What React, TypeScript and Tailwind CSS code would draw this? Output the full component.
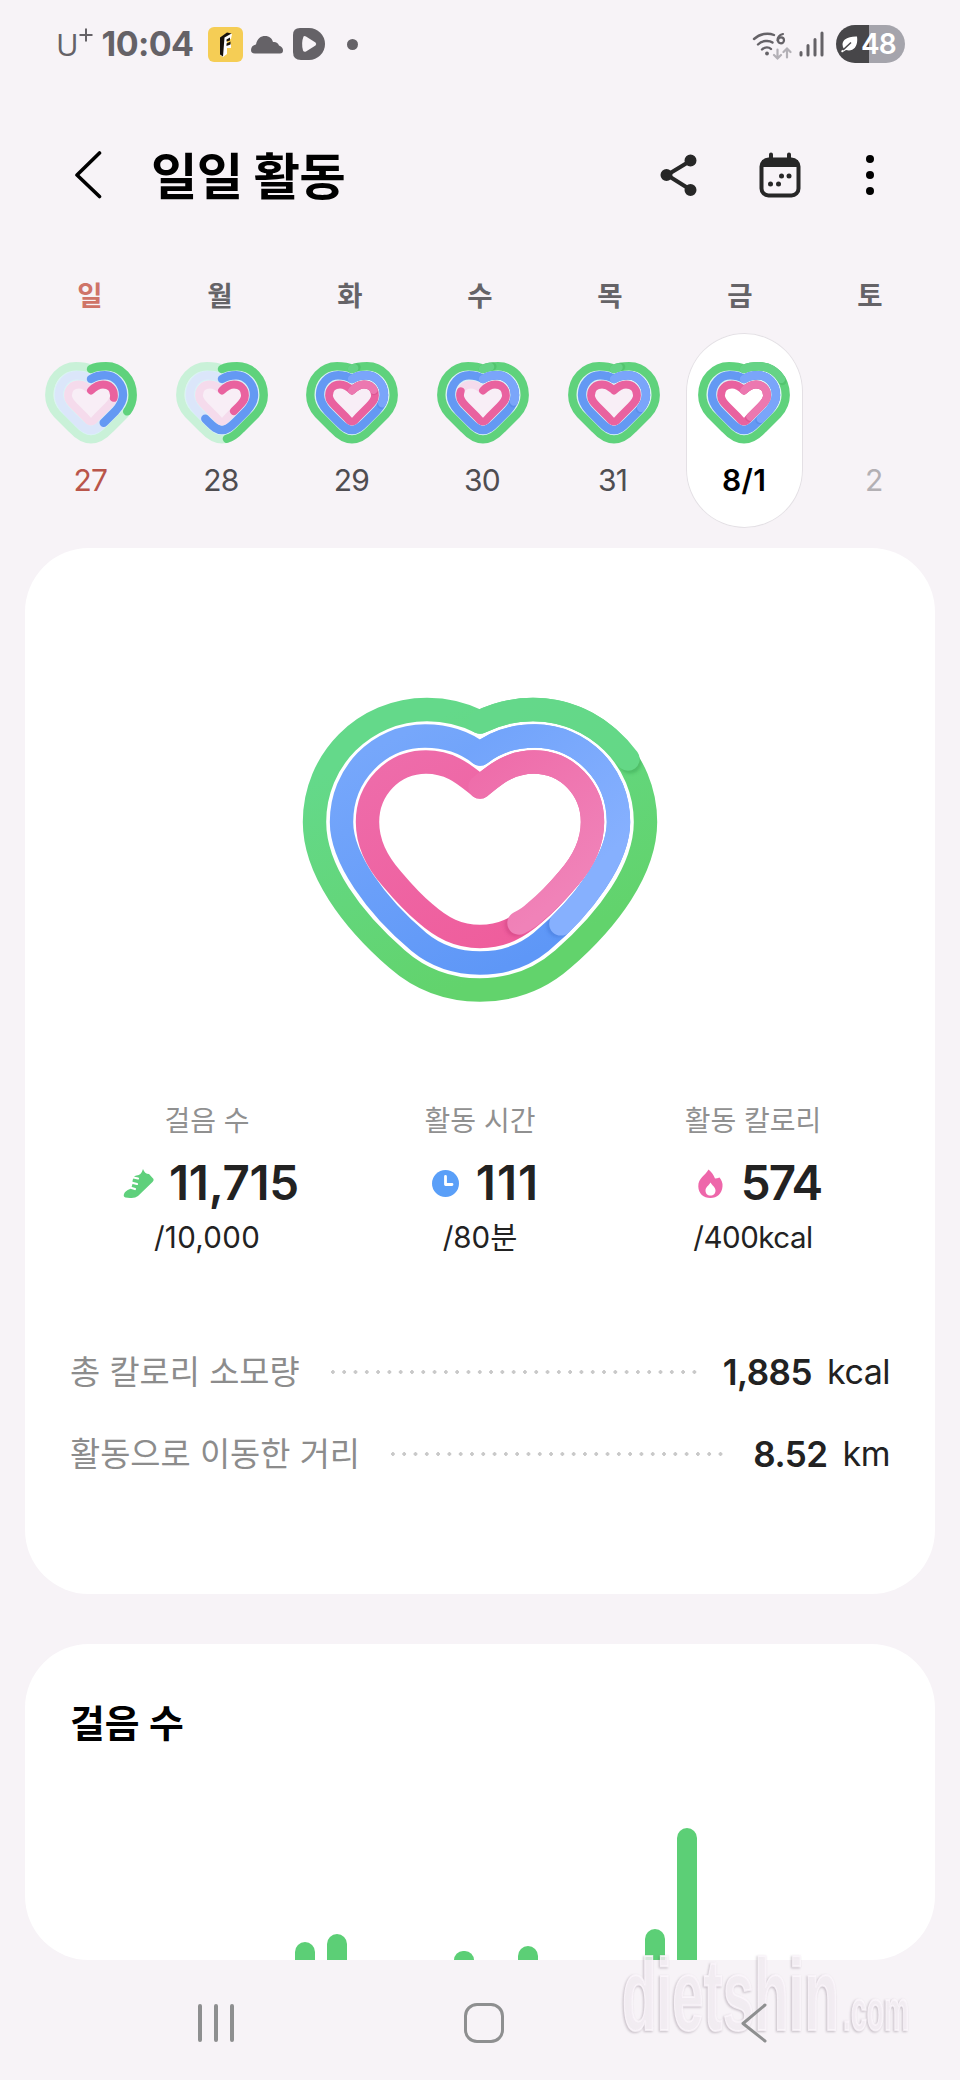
import React from 'react';

interface HeartDay {
  label: string;
  rings: [number, number, number] | null; // steps, time, calories in percent of the goal
  tone: string;
  selected?: boolean;
}

const weekdays = [
  { name: '일', tone: 'text-[#cf7468]' },
  { name: '월', tone: 'text-[#656367]' },
  { name: '화', tone: 'text-[#656367]' },
  { name: '수', tone: 'text-[#656367]' },
  { name: '목', tone: 'text-[#656367]' },
  { name: '금', tone: 'text-[#656367]' },
  { name: '토', tone: 'text-[#656367]' },
];

const days: HeartDay[] = [
  { label: '27', rings: [31, 42, 25], tone: 'text-[#b9554a]' },
  { label: '28', rings: [48, 61, 38], tone: 'text-[#4f4d51]' },
  { label: '29', rings: [101, 128, 119], tone: 'text-[#4f4d51]' },
  { label: '30', rings: [103, 127, 80], tone: 'text-[#4f4d51]' },
  { label: '31', rings: [102, 131, 98], tone: 'text-[#4f4d51]' },
  { label: '8/1', rings: [117, 139, 144], tone: 'font-semibold text-black', selected: true },
  { label: '2', rings: null, tone: 'text-[#b3b0b4]' },
];

const stepBars = [18, 26, 0, 0, 0, 9, 0, 14, 0, 0, 0, 31, 132];

const miniRings = [
  {
    d: 'M46 7 C50 5 55 4.3 61 4.3 C76 4.3 87.7 17 87.7 33 C87.7 41 84.5 47 80 52 L65 67 C59 73.5 53 77.4 46 77.4 C39 77.4 33 73.5 27 67 L12 52 C7.5 47 4.3 41 4.3 33 C4.3 17 16 4.3 31 4.3 C37 4.3 42 5 46 7 Z',
    width: 8.4,
    track: '#c9f1d8',
    main: '#5fd27c',
    lap: '#66d386',
    shade: '#3fae5a',
  },
  {
    d: 'M46 17 C50 14.5 54 13.3 60 13.3 C70 13.3 78 22 78 33 C78 39.5 75.5 43.5 70.5 49 L59.5 60 C54.5 65 51 68 46 68 C41 68 37.5 65 32.5 60 L21.5 49 C16.5 43.5 14 39.5 14 33 C14 22 22 13.3 32 13.3 C38 13.3 42 14.5 46 17 Z',
    width: 8.4,
    track: '#dbe6fa',
    main: '#6499f3',
    lap: '#7aa5fa',
    shade: '#4a7fdc',
  },
  {
    d: 'M46 28.5 C49 25.5 53 22.5 58 22.5 C64.5 22.5 69 27 69 33.5 C69 38 66.5 40.5 62.5 44.5 L52 55 C48.5 59 48 59.5 46 59.5 C44 59.5 43.5 59 40 55 L29.5 44.5 C25.5 40.5 23 38 23 33.5 C23 27 27.5 22.5 34 22.5 C39 22.5 43 25.5 46 28.5 Z',
    width: 7.8,
    track: '#f5dbec',
    main: '#e9629f',
    lap: '#ec78b0',
    shade: '#c74382',
  },
];

const bigRings = [
  {
    id: 'steps',
    d: 'M190 42 C206 34 224 29.5 243 29.5 C306 29.5 355.5 80 355.5 142 C355.5 190 318 240 273 279 C248 301 220 310 190 310 C160 310 132 301 107 279 C62 240 24.5 190 24.5 142 C24.5 80 74 29.5 137 29.5 C156 29.5 174 34 190 42 Z',
    lap: 'M190 42 C206 34 224 29.5 243 29.5 C281 29.5 315 48 338 79',
    base: ['#64d98a', '#62d36c'],
    over: ['#64d88a', '#64d884'],
    end: [338, 79, 2, 3],
    shade: '#2f9a48',
  },
  {
    id: 'time',
    d: 'M190 74 C205 62 224 56 245 56 C291 56 328.5 94 328.5 142 C328.5 178 294 226 251 262 C234 276 212 283 190 283 C168 283 146 276 129 262 C86 226 51.5 178 51.5 142 C51.5 94 89 56 135 56 C156 56 175 62 190 74 Z',
    lap: 'M190 74 C205 62 224 56 245 56 C291 56 328.5 94 328.5 142 C328.5 172.2 304.1 210.9 270.9 243.9',
    base: ['#76a7fb', '#5e97f7'],
    over: ['#72a4fb', '#86b0fe'],
    end: [270.9, 243.9, -3, 2],
    shade: '#3f74d2',
  },
  {
    id: 'calories',
    d: 'M190 107 C204 96 218 82 244 82 C277 82 302.5 109 302.5 142 C302.5 162 294 181 278 199 C267 212 256 224 245 233 C228 248 212 256.5 190 256.5 C168 256.5 152 248 135 233 C124 224 113 212 102 199 C86 181 77.5 162 77.5 142 C77.5 109 103 82 136 82 C162 82 176 96 190 107 Z',
    lap: 'M190 107 C204 96 218 82 244 82 C277 82 302.5 109 302.5 142 C302.5 162 294 181 278 199 C267 212 256 223 245 232 C240 237 235 240 229 243',
    base: ['#ee6dab', '#ef5c9b'],
    over: ['#ee6aa8', '#f082b8'],
    end: [229, 243, -3, 2],
    shade: '#c23678',
  },
];

const MiniHeart: React.FC<{ rings: [number, number, number]; selected?: boolean }> = ({ rings, selected }) => (
  <svg viewBox="0 0 92 82" className="h-[82px] w-[92px]" fill="none">
    <path d={miniRings[1].d} fill={selected ? '#ffffff' : '#f8eef6'} stroke="#d9f3f6" strokeWidth="10.8" />
    {miniRings.map((ring, i) => {
      const full = rings[i] >= 100;
      const lap = full ? rings[i] - 100 : rings[i];
      return (
        <g key={i} strokeWidth={ring.width} strokeLinecap="round" strokeLinejoin="round">
          <path d={ring.d} stroke={full ? ring.main : ring.track} />
          {full && (
            <path d={ring.d} pathLength={100} stroke={ring.shade} strokeOpacity="0.35" strokeDasharray={`${lap + 1} 200`} />
          )}
          <path d={ring.d} pathLength={100} stroke={full ? ring.lap : ring.main} strokeDasharray={`${lap} 200`} />
        </g>
      );
    })}
  </svg>
);

const BigHeart = () => (
  <svg viewBox="0 0 380 340" className="h-[340px] w-[380px]" fill="none">
    <defs>
      {bigRings.map((ring) => (
        <React.Fragment key={ring.id}>
          <linearGradient id={`${ring.id}-base`} x1="100" y1="60" x2="210" y2="290" gradientUnits="userSpaceOnUse">
            <stop stopColor={ring.base[0]} />
            <stop offset="1" stopColor={ring.base[1]} />
          </linearGradient>
          <linearGradient id={`${ring.id}-over`} x1="190" y1="60" x2="300" y2="190" gradientUnits="userSpaceOnUse">
            <stop stopColor={ring.over[0]} />
            <stop offset="1" stopColor={ring.over[1]} />
          </linearGradient>
          <mask id={`${ring.id}-mask`} maskUnits="userSpaceOnUse" x="0" y="0" width="380" height="340">
            <path d={ring.d} stroke="#fff" strokeWidth="23.4" />
          </mask>
        </React.Fragment>
      ))}
      <filter id="cap-shadow" x="-50%" y="-50%" width="200%" height="200%">
        <feGaussianBlur stdDeviation="1.8" />
      </filter>
    </defs>
    {bigRings.map((ring) => (
      <g key={ring.id} strokeWidth="23.4" strokeLinecap="round" strokeLinejoin="round">
        <path d={ring.d} stroke={`url(#${ring.id}-base)`} />
        <g mask={`url(#${ring.id}-mask)`}>
          <circle
            cx={ring.end[0] + ring.end[2]}
            cy={ring.end[1] + ring.end[3]}
            r="11.5"
            fill={ring.shade}
            fillOpacity="0.4"
            filter="url(#cap-shadow)"
          />
        </g>
        <path d={ring.lap} stroke={`url(#${ring.id}-over)`} />
      </g>
    ))}
  </svg>
);

const StatusBar = () => (
  <header className="flex h-[88px] items-center justify-between pl-[56px] pr-[55px] text-[#656267]">
    <div className="flex items-center">
      <span className="font-['Open_Sans',sans-serif] text-[31px] leading-none">U</span>
      <svg viewBox="0 0 14 14" className="-mt-[19px] h-[14px] w-[14px]" stroke="currentColor" strokeWidth="2">
        <path d="M7 0.5v13M0.5 7h13" />
      </svg>
      <span className="ml-[9px] w-[93px] whitespace-nowrap text-[34px] font-bold leading-none tracking-[-0.6px]">10:04</span>
      <svg viewBox="0 0 35 35" className="ml-[13px] h-[35px] w-[35px]">
        <rect width="35" height="35" rx="6" fill="#f5cd55" />
        <path d="M12 11l7-5 5 1-1 5-4 1v4h4v4h-4v6l-4 3-3-2z" fill="#fff" />
        <path d="M12 10.5l7-5 4.500 1-7 4-1.500 19-3-2zM18.500 12.500l3.500-2v3l-3.500 1zM18.500 16.500l4-2v3l-4 1.500z" fill="#17120c" />
      </svg>
      <svg viewBox="0 0 32 19" className="ml-[8px] h-[19px] w-[32px]" fill="currentColor">
        <path d="M4 18.5C1 18.5 0 17 0 15C0 12 2 10 5 9.5C6 3.5 10 1 14 1C18.5 1 21 3.5 22 7C25 6.5 27 8 28 10.5C31 11.5 32 13.5 32 15.5C32 17.5 31 18.5 29 18.5Z" />
      </svg>
      <svg viewBox="0 0 32 32" className="ml-[10px] h-[32px] w-[32px]">
        <path d="M7 0H16A16 16 0 0 1 16 32H8Q0 32 0 24V7Q0 0 7 0Z" fill="currentColor" />
        <path d="M10.5 8.5Q11.5 7.5 13 8.5L22.5 14.5Q24 16 22.5 17.5L13 23.5Q11 24.5 10 22.5Q8 15 10.5 8.5Z" fill="#f8f4f8" />
      </svg>
      <span className="ml-[22px] h-[11px] w-[11px] rounded-full bg-[#656267]" />
    </div>

    <div className="flex items-center">
      <svg viewBox="0 0 40 30" className="mt-[3px] h-[30px] w-[40px]" fill="none" strokeLinecap="round">
        <path d="M2 8C8 2.5 16 1.5 22 4M6 13.5C10 9.5 17 9 20.5 11.5M10 18.5C13 15.5 17 16 19 18" stroke="#656267" strokeWidth="2.4" />
        <circle cx="15" cy="22.5" r="1.9" fill="#656267" />
        <path d="M31 3C27 4 25.5 7 25.5 9.5" stroke="#656267" strokeWidth="2.2" />
        <circle cx="29" cy="9.3" r="3" stroke="#656267" strokeWidth="2.2" />
        <path d="M25.5 18.5v9m-3.5-3.5l3.5 3.5l3.5-3.5M35 26.5v-9m-3.5 3.5l3.5-3.5l3.5 3.5" stroke="#b3b0b6" strokeWidth="2.2" />
      </svg>
      <svg viewBox="0 0 25 26" className="ml-[7px] h-[26px] w-[25px]" stroke="#656267" strokeWidth="3" strokeLinecap="round">
        <path d="M2 21.5V24M9 14.5V24M16 8.5V24M23 2V24" />
      </svg>
      <div className="ml-[12px] flex h-[38px] w-[69px] items-center overflow-hidden rounded-full bg-gradient-to-r from-[#474649] from-[48%] to-[#a5a4ac] to-[48%] pl-[4px]">
        <svg viewBox="0 0 18 18" className="h-[18px] w-[18px]">
          <path d="M1 16L4 14C0 8 4 1 17 1.5C18.5 12 13 17 6 15L2 17.5Z" fill="#fff" />
          <path d="M3 15L11 7.5" stroke="#474649" strokeWidth="1.5" />
        </svg>
        <span className="ml-[3px] text-[28px] font-semibold leading-none tracking-[-1px] text-white">48</span>
      </div>
    </div>
  </header>
);

const TitleBar = () => (
  <div className="flex h-[174px] items-center pl-[74px] pr-[86px]">
    <svg viewBox="0 0 28 48" className="h-[48px] w-[28px]" fill="none" stroke="#000" strokeWidth="3.6" strokeLinecap="round" strokeLinejoin="round">
      <path d="M25.5 2L3 24L25.5 45.5" />
    </svg>
    <h1 className="ml-[49px] mt-[4px] flex-1 whitespace-nowrap text-[50.5px] font-bold leading-none tracking-[-0.8px] text-black">일일 활동</h1>
    <svg viewBox="0 0 38 44" className="h-[44px] w-[38px]" stroke="#272727" strokeWidth="4">
      <path d="M31 7.5L7 22L31 37" fill="none" />
      <circle cx="30.5" cy="7.5" r="4" fill="#272727" />
      <circle cx="6.5" cy="22" r="4" fill="#272727" />
      <circle cx="30.5" cy="37" r="4" fill="#272727" />
    </svg>
    <svg viewBox="0 0 44 46" className="ml-[60px] h-[46px] w-[44px]">
      <rect x="3.5" y="7.5" width="37" height="36" rx="7" fill="none" stroke="#272727" strokeWidth="4" />
      <path d="M4 8H40V15H4Z" fill="#272727" />
      <path d="M13 2.5V8M31 2.5V8" stroke="#272727" strokeWidth="4" strokeLinecap="round" />
      <circle cx="12.5" cy="32" r="2.5" fill="#272727" />
      <circle cx="20.5" cy="32" r="2.5" fill="#272727" />
      <circle cx="23.5" cy="24" r="2.5" fill="#272727" />
      <circle cx="31" cy="24" r="2.5" fill="#272727" />
    </svg>
    <div className="ml-[64px] flex flex-col gap-[8px]">
      <span className="h-[8px] w-[8px] rounded-full bg-black" />
      <span className="h-[8px] w-[8px] rounded-full bg-black" />
      <span className="h-[8px] w-[8px] rounded-full bg-black" />
    </div>
  </div>
);

const WeekStrip = () => (
  <section className="h-[286px]">
    <div className="ml-[25px] grid h-[71px] w-[910px] grid-cols-7 pt-[19px]">
      {weekdays.map((day) => (
        <span key={day.name} className={`text-center text-[27.5px] font-semibold leading-[30px] ${day.tone}`}>
          {day.name}
        </span>
      ))}
    </div>
    <div className="ml-[26px] grid w-[914px] grid-cols-7">
      {days.map((day) => (
        <div key={day.label} className="flex justify-center">
          <div
            className={`flex h-[195px] w-[117px] flex-col items-center rounded-full pt-[29px] ${
              day.selected ? 'bg-white shadow-[inset_0_0_0_1px_#e4e0e5]' : ''
            }`}
          >
            <div className="h-[82px]">
              {day.rings && <MiniHeart rings={day.rings} selected={day.selected} />}
            </div>
            <span
              className={`mt-[21px] text-[30px] leading-[30px] ${
                day.selected ? 'tracking-[0.4px]' : 'mr-[2px] tracking-[-0.8px]'
              } ${day.tone}`}
            >
              {day.label}
            </span>
          </div>
        </div>
      ))}
    </div>
  </section>
);

const ShoeIcon = () => (
  <svg viewBox="0 0 31 31" className="h-[31px] w-[31px]">
    <path d="M20 1C21 4 23 6 26 6L30.5 11Q31 12.5 29.5 14L15 28Q12 30.5 7 30L2.5 29.5Q0 28.5 1 26Q2 23 7 21Q9 19 9.5 16Q9 9 13 7.5Q18 8 20 1Z" fill="#5fd07c" />
    <path d="M8 9L15 10.5M8 14.5L14 16M7 19.5L12 21" stroke="#fff" strokeWidth="2.2" strokeLinecap="round" />
  </svg>
);

const ClockIcon = () => (
  <svg viewBox="0 0 27 27" className="h-[27px] w-[27px]">
    <circle cx="13.5" cy="13.5" r="13.5" fill="#5a9ff8" />
    <path d="M13.5 6.5V14.5H20" fill="none" stroke="#fff" strokeWidth="2.8" strokeLinecap="round" strokeLinejoin="round" />
  </svg>
);

const FlameIcon = () => (
  <svg viewBox="0 0 25 29" className="h-[29px] w-[25px]">
    <path d="M10.5 0.5C13 2.5 15.5 5.5 17 9.5C18.5 9.5 20 9 21.5 8.5C23.5 11 25 14 24.5 17.5C24 24.5 19 29 12.5 29C5.5 29 0.5 24.5 0.3 17.5C0 9 7.5 6.5 10.5 0.5Z" fill="#ee67aa" />
    <path d="M12.5 13.5C14 16.5 17.5 18 17.5 21.5C17.5 24.5 15.5 26.5 12.5 26.5C9.5 26.5 7.5 24.5 7.5 21.5C7.5 18 11 16.5 12.5 13.5Z" fill="#fff" />
  </svg>
);

const stats = [
  { title: '걸음 수', value: '11,715', goal: '/10,000', icon: <ShoeIcon />, gap: 'ml-[8px] gap-[15px]', tracking: 'tracking-[-0.3px]', goalTracking: 'tracking-[0.3px]' },
  { title: '활동 시간', value: '111', goal: '/80분', icon: <ClockIcon />, gap: 'ml-[11px] gap-[17px]', tracking: 'tracking-[1px]', goalTracking: 'tracking-[0px]' },
  { title: '활동 칼로리', value: '574', goal: '/400kcal', icon: <FlameIcon />, gap: 'ml-[13px] gap-[18px]', tracking: 'tracking-[-1.8px]', goalTracking: 'tracking-[-0.5px]' },
];

const totals = [
  { title: '총 칼로리 소모량', value: '1,885', unit: 'kcal' },
  { title: '활동으로 이동한 거리', value: '8.52', unit: 'km' },
];

const ActivityCard = () => (
  <section className="mx-[25px] flex h-[1046px] flex-col items-center rounded-[64px] bg-white pt-[132px]">
    <BigHeart />

    {/* Goals */}
    <div className="mt-[85px] grid w-[819px] grid-cols-3">
      {stats.map((stat) => (
        <div key={stat.title} className="flex flex-col items-center">
          <span className="text-[28px] leading-[32px] text-[#909090]">{stat.title}</span>
          <div className={`mt-[20px] flex h-[52px] items-center ${stat.gap}`}>
            {stat.icon}
            <span className={`text-[47.5px] font-semibold leading-none text-[#222] ${stat.tracking}`}>{stat.value}</span>
          </div>
          <span className={`mt-[12px] text-[29.5px] leading-[32px] text-[#222] ${stat.goalTracking}`}>{stat.goal}</span>
        </div>
      ))}
    </div>

    {/* Totals */}
    <div className="mt-[78px] flex w-[820px] flex-col">
      {totals.map((total) => (
        <div key={total.title} className="flex h-[82px] items-center">
          <span className="whitespace-nowrap text-[32.8px] leading-none text-[#8c8c8c]">{total.title}</span>
          <span className="ml-[31px] mr-[24px] h-[4px] flex-1 bg-[radial-gradient(circle_at_2px_2px,#c9c9c9_1.6px,transparent_2px)] bg-[length:11.3px_4px]" />
          <span className="text-[35px] font-semibold leading-none tracking-[-0.5px] text-[#222]">{total.value}</span>
          <span className="ml-[15px] text-[34px] leading-none tracking-[-0.5px] text-[#222]">{total.unit}</span>
        </div>
      ))}
    </div>
  </section>
);

const StepsCard = () => (
  <section className="mx-[25px] mt-[50px] flex h-[316px] flex-col justify-between overflow-hidden rounded-[64px] bg-white pt-[58px]">
    <h2 className="pl-[45px] text-[37.8px] font-semibold leading-[42px] text-black">걸음 수</h2>
    <div className="ml-[270px] flex items-end gap-[11.8px]">
      {stepBars.map((height, i) => (
        <span key={i} className="w-[20px] rounded-t-full bg-[#5ccf76]" style={{ height }} />
      ))}
    </div>
  </section>
);

const NavBar = () => (
  <nav className="flex h-[120px] items-center pl-[198px] pt-[6px] text-[#8e8f90]">
    <svg viewBox="0 0 36 38" className="h-[38px] w-[36px]" stroke="currentColor" strokeWidth="4" strokeLinecap="round">
      <path d="M2 2V36M18 2V36M34 2V36" />
    </svg>
    <span className="ml-[230px] h-[40px] w-[40px] rounded-[13px] border-[3.5px] border-[#8e8f90]" />
    <svg viewBox="0 0 26 40" className="z-10 ml-[237px] h-[40px] w-[26px]" fill="none" stroke="currentColor" strokeWidth="3" strokeLinecap="round" strokeLinejoin="round">
      <path d="M24 2L2 20.5L24 38" />
    </svg>
  </nav>
);

const Watermark = () => (
  <div className="absolute bottom-[25px] left-[622px] flex w-[300px] items-baseline whitespace-nowrap font-['Liberation_Sans',sans-serif] font-bold text-[#fbf6fb]/80 drop-shadow-[-1px_1px_1px_rgba(60,40,60,0.3)] [-webkit-text-stroke:2px_rgba(251,246,251,0.8)]">
    <div className="w-[221px]">
      <span className="inline-block origin-left scale-x-[0.555] text-[102px] leading-[120px]">dietshin</span>
    </div>
    <div className="w-[68px]">
      <span className="inline-block origin-left scale-x-[0.49] text-[58px] leading-[66px]">.com</span>
    </div>
  </div>
);

const App: React.FC = () => {
  return (
    <div className="relative h-[2080px] w-[960px] overflow-hidden bg-[#f7f3f7] font-['Inter','Noto_Sans_CJK_KR',sans-serif]">
      <StatusBar />
      <TitleBar />
      <WeekStrip />
      <ActivityCard />
      <StepsCard />
      <NavBar />
      <Watermark />
    </div>
  );
};

export default App;
